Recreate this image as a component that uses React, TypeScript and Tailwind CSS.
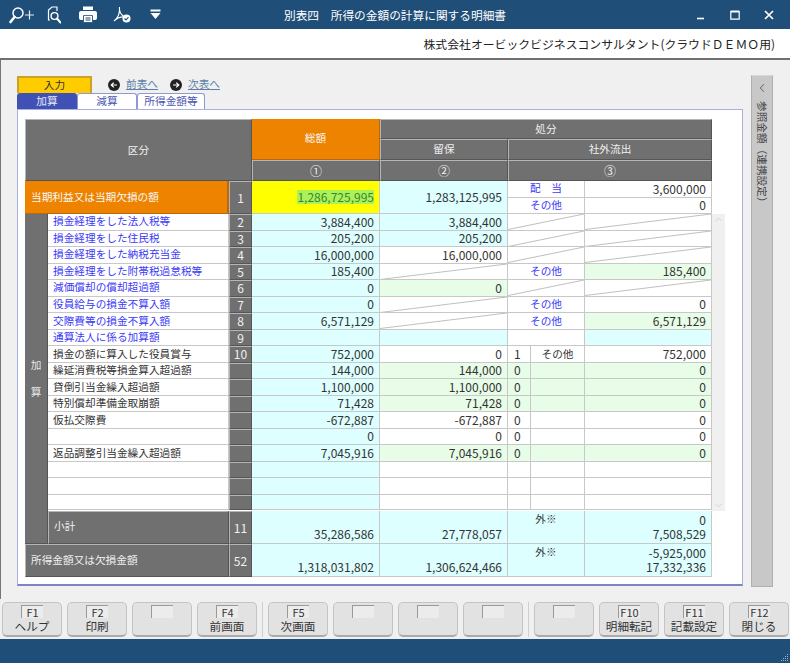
import React from 'react';
import { ChevronUp, ChevronDown, ChevronLeft } from 'lucide-react';

const font = { fontFamily: '"Noto Sans CJK JP", "Liberation Sans", sans-serif' };

type Cell = 'c' | 'w' | 'g';
const bg: Record<Cell, string> = { c: 'bg-[#ddffff]', w: 'bg-white', g: 'bg-[#e8fde8]' };

type Row = {
  label?: string;
  blue?: boolean;
  no?: string;
  total?: string;
  ryuho?: string;
  ryuhoBg?: Cell;
  ryuhoDiag?: boolean;
  // 社外流出: 'diag' both slashed, otherwise label / code
  diag?: boolean;
  code?: string;
  other?: string;
  otherBlue?: boolean;
  value?: string;
  valueBg?: Cell;
  split?: boolean;
};

const rows: Row[] = [
  { label: '損金経理をした法人税等', blue: true, no: '2', total: '3,884,400', ryuho: '3,884,400', ryuhoBg: 'c', diag: true },
  { label: '損金経理をした住民税', blue: true, no: '3', total: '205,200', ryuho: '205,200', ryuhoBg: 'c', diag: true },
  { label: '損金経理をした納税充当金', blue: true, no: '4', total: '16,000,000', ryuho: '16,000,000', diag: true },
  { label: '損金経理をした附帯税過怠税等', blue: true, no: '5', total: '185,400', ryuhoDiag: true, other: 'その他', otherBlue: true, value: '185,400', valueBg: 'g' },
  { label: '減価償却の償却超過額', blue: true, no: '6', total: '0', ryuho: '0', ryuhoBg: 'g', diag: true },
  { label: '役員給与の損金不算入額', blue: true, no: '7', total: '0', ryuhoDiag: true, other: 'その他', otherBlue: true, value: '0' },
  { label: '交際費等の損金不算入額', blue: true, no: '8', total: '6,571,129', ryuhoDiag: true, other: 'その他', otherBlue: true, value: '6,571,129', valueBg: 'g' },
  { label: '通算法人に係る加算額', blue: true, no: '9', ryuhoBg: 'c', valueBg: 'c' },
  { label: '損金の額に算入した役員賞与', no: '10', total: '752,000', ryuho: '0', split: true, code: '1', other: 'その他', value: '752,000' },
  { label: '繰延消費税等損金算入超過額', total: '144,000', ryuho: '144,000', ryuhoBg: 'g', split: true, code: '0', value: '0', valueBg: 'g' },
  { label: '貸倒引当金繰入超過額', total: '1,100,000', ryuho: '1,100,000', ryuhoBg: 'g', split: true, code: '0', value: '0', valueBg: 'g' },
  { label: '特別償却準備金取崩額', total: '71,428', ryuho: '71,428', ryuhoBg: 'g', split: true, code: '0', value: '0', valueBg: 'g' },
  { label: '仮払交際費', total: '-672,887', ryuho: '-672,887', split: true, code: '0', value: '0' },
  { total: '0', ryuho: '0', split: true, code: '0', value: '0' },
  { label: '返品調整引当金繰入超過額', total: '7,045,916', ryuho: '7,045,916', ryuhoBg: 'g', split: true, code: '0', value: '0', valueBg: 'g' },
  { split: true },
  { split: true },
  { split: true },
];

const grey = 'bg-[#707070] text-[#f0f0f0] border-r border-b border-r-[#555] border-b-[#555] border-t border-l border-t-[#b5b5b5] border-l-[#b5b5b5]';
const line = 'border-r border-b border-[#c8c8c8]';

function Diag({ className = '' }: { className?: string }) {
  return (
    <div className={`relative ${line} ${className}`}>
      <svg className="absolute inset-0 w-full h-full" viewBox="0 0 100 100" preserveAspectRatio="none">
        <line x1="0" y1="100" x2="100" y2="0" stroke="#c0c0c0" strokeWidth="1" vectorEffect="non-scaling-stroke" />
      </svg>
    </div>
  );
}

function Num({ v, cell = 'w', className = '' }: { v?: string; cell?: Cell; className?: string }) {
  return <div className={`${bg[cell]} ${line} flex items-center justify-end pr-[5px] leading-none text-[12px] ${className}`}>{v}</div>;
}

function Center({ v, blue, cell = 'w', span }: { v?: string; blue?: boolean; cell?: Cell; span?: boolean }) {
  return (
    <div className={`${bg[cell]} ${line} flex items-center justify-center leading-none text-[10.67px] ${blue ? 'text-[#3b3bf5]' : ''} ${span ? 'col-span-2' : ''}`}>
      {v}
    </div>
  );
}

function TableRow({ r, last }: { r: Row; last: boolean }) {
  const right = r.valueBg ?? 'w';
  return (
    <div className={`grid grid-cols-[181px_23px_128px_128px_23px_54px_127px] ${last ? 'h-[15px]' : 'h-[16.53px]'}`}>
      <div className={`bg-white ${line} flex items-center pl-[5px] leading-none whitespace-nowrap text-[10.67px] ${r.blue ? 'text-[#3b3bf5]' : 'text-[#333]'}`}>{r.label}</div>
      <div className={`${grey} flex items-center justify-center leading-none text-[12px]`}>{r.no}</div>
      <Num v={r.total} cell="c" />
      {r.ryuhoDiag ? <Diag /> : <Num v={r.ryuho} cell={r.ryuhoBg ?? 'w'} />}
      {r.diag ? (
        <>
          <Diag className="col-span-2" />
          <Diag />
        </>
      ) : r.split ? (
        <>
          <div className={`${bg[right]} ${line} flex items-center pl-[6px] leading-none text-[12px]`}>{r.code}</div>
          <Center v={r.other} cell={right} />
          <Num v={r.value} cell={right} />
        </>
      ) : (
        <>
          <Center v={r.other} blue={r.otherBlue} span />
          <Num v={r.value} cell={right} />
        </>
      )}
    </div>
  );
}

function FKey({ k, label }: { k?: string; label?: string }) {
  return (
    <button className="w-[60px] h-[35px] rounded-[5px] bg-[#e2e2e2] border border-[#c4c4c4] border-b-2 border-b-[#aaa] flex flex-col items-center text-[#333] leading-none">
      <span className="w-[22px] h-[13px] mt-[2px] bg-[#ececec] border-t border-l border-[#999] border-r-[#fff] border-b-[#fff] text-[11px] leading-[12px] text-center">{k}</span>
      <span className="text-[11.6px] mt-[3px] whitespace-nowrap">{label}</span>
    </button>
  );
}

function ToolbarIcons() {
  return (
    <div className="flex items-center pl-[9px] text-white">
      <svg width="26" height="18" viewBox="0 0 26 18" fill="none" stroke="currentColor">
        <circle cx="9" cy="7" r="5" strokeWidth="1.5" />
        <path d="M5.5 11 L1.5 16" strokeWidth="2.6" strokeLinecap="round" />
        <path d="M16 9 H25 M20.5 4.5 V13.5" strokeWidth="1.2" opacity="0.9" />
      </svg>
      <svg className="ml-[12px]" width="14" height="18" viewBox="0 0 14 18" fill="none" stroke="currentColor">
        <path d="M3 14 H1.5 V4 L5 1 H10 V5" strokeWidth="1.2" />
        <circle cx="7.5" cy="10" r="3.4" strokeWidth="1.4" />
        <path d="M10 12.5 L13.5 16.5" strokeWidth="2" strokeLinecap="round" />
      </svg>
      <svg className="ml-[18px]" width="18" height="17" viewBox="0 0 18 17">
        <path d="M4 0.5 H14 V4 H4 Z" fill="#fff" />
        <path d="M2 5 H16 A2 2 0 0 1 18 7 V12 A2 2 0 0 1 16 14 H14 V10 H4 V14 H2 A2 2 0 0 1 0 12 V7 A2 2 0 0 1 2 5 Z" fill="#fff" />
        <path d="M4.5 9.5 H13.5 V16.5 H4.5 Z" fill="#fff" stroke="#1f4e79" strokeWidth="0.8" />
        <path d="M6.5 12 H11.5 M6.5 14 H11.5" stroke="#1f4e79" strokeWidth="1" />
      </svg>
      <svg className="ml-[16px]" width="19" height="18" viewBox="0 0 19 18" fill="none">
        <path d="M1 15 C5 12 7 7 6.5 1 C6 5 8 9 12 11 C8 10.5 4 12 1 15 Z" stroke="#fff" strokeWidth="1.1" />
        <circle cx="13.5" cy="12.5" r="4" fill="#fff" />
        <path d="M11.5 12.5 L13 14 L15.5 11.2" stroke="#1f4e79" strokeWidth="1.1" />
      </svg>
      <svg className="ml-[18px]" width="11" height="11" viewBox="0 0 11 11">
        <path d="M0.5 0.5 H10.5 V2.5 H0.5 Z M0.5 4 H10.5 L5.5 10 Z" fill="#fff" />
      </svg>
    </div>
  );
}

export default function App() {
  return (
    <div style={font} className="w-[790px] h-[663px] flex flex-col overflow-hidden bg-[#f0f0f0] text-[#333]">
      {/* title bar */}
      <div className="h-[29px] shrink-0 bg-[#1f4e79] relative flex items-center justify-between">
        <ToolbarIcons />
        <div className="absolute left-0 right-0 text-center text-white text-[11.7px]">別表四　所得の金額の計算に関する明細書</div>
        <div className="flex items-center gap-[24px] pr-[16px] text-white">
          <svg width="10" height="10" viewBox="0 0 10 10"><path d="M1 8.5 H8" stroke="#fff" strokeWidth="1.6" /></svg>
          <svg width="10" height="10" viewBox="0 0 10 10" fill="none"><path d="M0.8 1.5 H9.2 V9.2 H0.8 Z" stroke="#fff" strokeWidth="1.2" /><path d="M0.8 1.5 H9.2" stroke="#fff" strokeWidth="2" /></svg>
          <svg width="10" height="10" viewBox="0 0 10 10" fill="none"><path d="M1 1 L9 9 M9 1 L1 9" stroke="#fff" strokeWidth="1.7" /></svg>
        </div>
      </div>
      <div className="h-[31px] shrink-0 bg-white border-b-2 border-[#707070] flex items-center justify-end pr-[15px] text-[11.85px] text-[#222]">
        株式会社オービックビジネスコンサルタント(クラウドＤＥＭＯ用)
      </div>

      {/* main */}
      <div className="flex-1 border-l border-[#777] pt-[16px] pl-[16px] flex items-start gap-[8px]">
        <div className="w-[726px]">
          <div className="h-[17px] flex items-center text-[10.67px]">
            <div className="w-[75px] h-[17px] bg-[#ffcc00] border-2 border-b-0 border-[#c9a227] flex items-center justify-center text-[#333] leading-none">入力</div>
            <div className="ml-[16px] w-[12px] h-[12px] rounded-full bg-[#222] flex items-center justify-center">
              <svg width="8" height="8" viewBox="0 0 8 8" fill="none"><path d="M7 4 H1.5 M3.8 1.6 L1.2 4 L3.8 6.4" stroke="#fff" strokeWidth="1.2" /></svg>
            </div>
            <span className="ml-[6px] text-[#5c7fa8] underline leading-none">前表へ</span>
            <div className="ml-[12px] w-[12px] h-[12px] rounded-full bg-[#222] flex items-center justify-center">
              <svg width="8" height="8" viewBox="0 0 8 8" fill="none"><path d="M1 4 H6.5 M4.2 1.6 L6.8 4 L4.2 6.4" stroke="#fff" strokeWidth="1.2" /></svg>
            </div>
            <span className="ml-[6px] text-[#5c7fa8] underline leading-none">次表へ</span>
          </div>
          <div className="h-[16px] flex text-[10.67px] leading-none">
            <div className="w-[60px] bg-[#3f51b5] text-[#e8e8f8] rounded-t-[3px] flex items-center justify-center">加算</div>
            <div className="w-[60px] bg-white text-[#4a55b0] border border-b-0 border-[#8f99d8] rounded-t-[3px] flex items-center justify-center">減算</div>
            <div className="w-[68px] bg-white text-[#4a55b0] border border-b-0 border-[#8f99d8] rounded-t-[3px] flex items-center justify-center">所得金額等</div>
          </div>

          {/* panel */}
          <div className="h-[477px] bg-white border border-[#a9b0de] border-b-2 border-b-[#7c85c4] pl-[7px] pt-[9px]">
            <div className="w-[687px]">
              {/* header */}
              <div className="grid grid-cols-[204px_23px_128px_128px_77px_127px] grid-rows-[20px_21px_21px] h-[62px] text-[10.67px] leading-none">
                <div className={`${grey} col-span-2 row-span-3 flex items-center justify-center`}>区分</div>
                <div className="row-span-2 bg-[#ee8300] text-[#f8f8f8] border-b border-r border-[#b96a10] flex items-center justify-center pb-[2px]">総額</div>
                <div className={`${grey} col-span-3 flex items-center justify-center`}>処分</div>
                <div className={`${grey} flex items-center justify-center`}>留保</div>
                <div className={`${grey} col-span-2 flex items-center justify-center`}>社外流出</div>
                <div className={`${grey} flex items-center justify-center text-[12px]`}>①</div>
                <div className={`${grey} flex items-center justify-center text-[12px]`}>②</div>
                <div className={`${grey} col-span-2 flex items-center justify-center text-[12px]`}>③</div>
              </div>

              {/* row 1 */}
              <div className="grid grid-cols-[204px_23px_128px_128px_77px_127px] h-[33px] text-[10.67px] leading-none">
                <div className="bg-[#ee8300] text-[#f8f8f8] border-r-2 border-b border-[#b96a10] flex items-center pl-[6px]">当期利益又は当期欠損の額</div>
                <div className={`${grey} flex items-center justify-center text-[12px]`}>1</div>
                <div className={`bg-[#ffff00] ${line} flex items-center justify-end pr-[5px] text-[12px]`}>
                  <span className="bg-[#aef05a] text-[#2e8b2e] py-[1px]">1,286,725,995</span>
                </div>
                <Num v="1,283,125,995" cell="c" />
                <div className="grid grid-rows-2">
                  <Center v="配　当" blue />
                  <Center v="その他" blue />
                </div>
                <div className="grid grid-rows-2">
                  <Num v="3,600,000" />
                  <Num v="0" />
                </div>
              </div>
            </div>

            {/* body: 加算 cell runs down to 小計, scroll strip to the right of the rows */}
            <div className="flex">
              <div className="w-[23px] h-[330px] bg-[#707070] border-r border-b border-[#555] text-[#e8e8e8] text-[10.67px] flex flex-col items-center justify-center gap-[16px] leading-none">
                <span>加</span>
                <span>算</span>
              </div>
              <div>
                <div className="flex">
                  <div className="w-[664px]">
                    {rows.map((r, i) => (
                      <TableRow key={i} r={r} last={i === rows.length - 1} />
                    ))}
                  </div>
                  <div className="w-[13px] h-[297px] bg-[#f0f0f0] flex flex-col items-center justify-between text-[#cfcfcf]">
                    <ChevronUp size={11} />
                    <ChevronDown size={11} />
                  </div>
                </div>
                {/* 小計 */}
                <div className="grid grid-cols-[181px_23px_128px_128px_77px_127px] w-[664px] h-[33px] text-[12px] leading-none">
                  <div className={`${grey} flex items-center pl-[5px] pb-[3px] text-[10.67px]`}>小計</div>
                  <div className={`${grey} flex items-center justify-center`}>11</div>
                  <div className={`bg-[#ddffff] ${line} flex items-end justify-end pr-[5px] pb-[3px]`}>35,286,586</div>
                  <div className={`bg-[#ddffff] ${line} flex items-end justify-end pr-[5px] pb-[3px]`}>27,778,057</div>
                  <div className={`bg-[#ddffff] ${line} flex items-start justify-center pt-[3px] text-[10.67px]`}>外※</div>
                  <div className={`bg-[#ddffff] ${line} flex flex-col justify-between items-end pr-[5px] py-[3px]`}>
                    <span>0</span>
                    <span>7,508,529</span>
                  </div>
                </div>
              </div>
            </div>

            {/* 所得金額 */}
            <div className="grid grid-cols-[204px_23px_128px_128px_77px_127px] w-[687px] h-[33px] text-[12px] leading-none">
              <div className={`${grey} flex items-center pl-[5px] text-[10.67px]`}>所得金額又は欠損金額</div>
              <div className={`${grey} flex items-center justify-center`}>52</div>
              <div className={`bg-[#ddffff] ${line} flex items-end justify-end pr-[5px] pb-[3px]`}>1,318,031,802</div>
              <div className={`bg-[#ddffff] ${line} flex items-end justify-end pr-[5px] pb-[3px]`}>1,306,624,466</div>
              <div className={`bg-[#ddffff] ${line} flex items-start justify-center pt-[3px] text-[10.67px]`}>外※</div>
              <div className={`bg-[#ddffff] ${line} flex flex-col justify-between items-end pr-[5px] py-[3px]`}>
                <span>-5,925,000</span>
                <span>17,332,336</span>
              </div>
            </div>
          </div>
        </div>

        {/* right side tab */}
        <div className="-mt-[1px] w-[22px] h-[512px] bg-[#c8c8c8] border border-[#b0b0b0] border-t-[#d8d8d8] flex flex-col items-center pt-[5px] text-[#444]">
          <ChevronLeft size={14} strokeWidth={1.4} />
          <span className="[writing-mode:vertical-rl] [text-orientation:sideways] text-[10.67px] mt-[6px] leading-none whitespace-nowrap">参照金額（連携設定）</span>
        </div>
      </div>

      {/* function keys */}
      <div className="h-[40px] shrink-0 flex items-start pl-[2px] pt-[3px] gap-[5px]">
        <FKey k="F1" label="ヘルプ" />
        <FKey k="F2" label="印刷" />
        <FKey />
        <FKey k="F4" label="前画面" />
        <div className="w-[1px] h-[35px] bg-[#cfcfcf]" />
        <FKey k="F5" label="次画面" />
        <FKey />
        <FKey />
        <FKey />
        <div className="w-[1px] h-[35px] bg-[#cfcfcf]" />
        <FKey />
        <FKey k="F10" label="明細転記" />
        <FKey k="F11" label="記載設定" />
        <FKey k="F12" label="閉じる" />
      </div>
      <div className="h-[24px] shrink-0 bg-[#1f4e79] flex items-end justify-end pr-[1px] pb-[1px]">
        <svg width="10" height="10" viewBox="0 0 10 10" fill="#9fb4c8">
          <rect x="8" y="8" width="1" height="1" />
          <rect x="6" y="8" width="1" height="1" />
          <rect x="4" y="8" width="1" height="1" />
          <rect x="2" y="8" width="1" height="1" />
          <rect x="8" y="6" width="1" height="1" />
          <rect x="6" y="6" width="1" height="1" />
          <rect x="4" y="6" width="1" height="1" />
          <rect x="8" y="4" width="1" height="1" />
          <rect x="6" y="4" width="1" height="1" />
          <rect x="8" y="2" width="1" height="1" />
        </svg>
      </div>
    </div>
  );
}
